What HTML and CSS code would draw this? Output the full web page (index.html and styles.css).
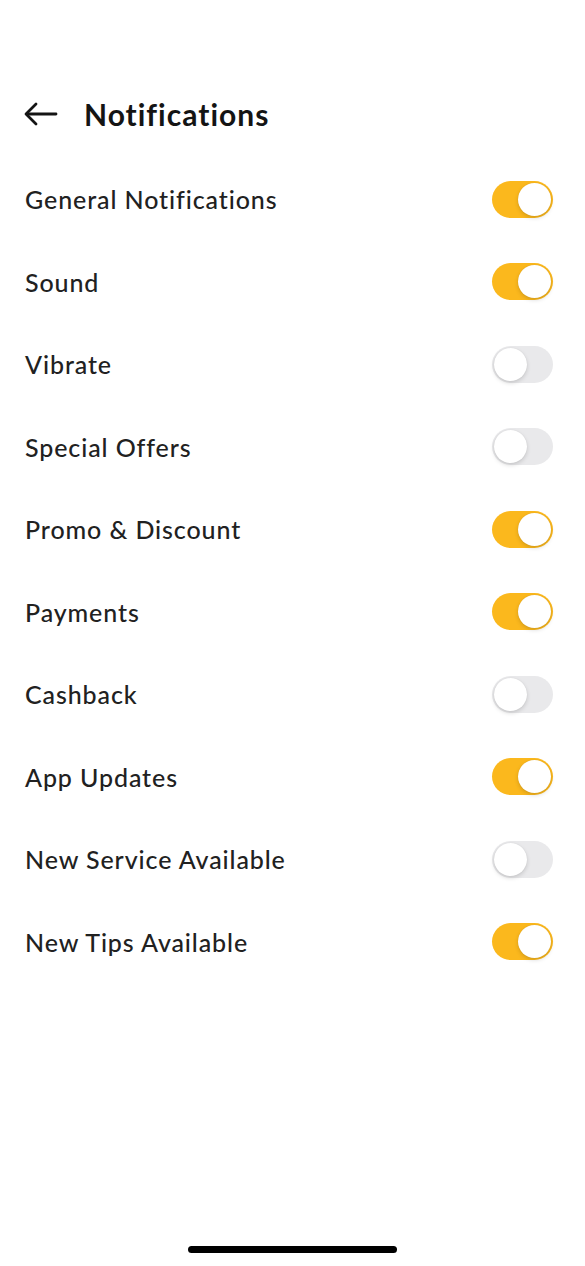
FILE: index.html
```html
<!DOCTYPE html>
<html lang="en">
<head>
    <meta charset="UTF-8">
    <meta name="viewport" content="width=device-width, initial-scale=1.0">
    <title>Notifications</title>
    <link rel="stylesheet" href="styles.css">
</head>
<body>
    <div class="screen">
        <header class="header">
            <svg class="back" width="34" height="24" viewBox="0 0 34 24" fill="none" stroke="#141414" stroke-width="2.8" stroke-linecap="round" stroke-linejoin="round">
                <path d="M32 12H3"/>
                <path d="M12 2L2 12L12 22"/>
            </svg>
            <h1>Notifications</h1>
        </header>

        <ul class="settings">
            <li class="row"><span>General Notifications</span><span class="toggle on"></span></li>
            <li class="row"><span>Sound</span><span class="toggle on"></span></li>
            <li class="row"><span>Vibrate</span><span class="toggle"></span></li>
            <li class="row"><span>Special Offers</span><span class="toggle"></span></li>
            <li class="row"><span>Promo &amp; Discount</span><span class="toggle on"></span></li>
            <li class="row"><span>Payments</span><span class="toggle on"></span></li>
            <li class="row"><span>Cashback</span><span class="toggle"></span></li>
            <li class="row"><span>App Updates</span><span class="toggle on"></span></li>
            <li class="row"><span>New Service Available</span><span class="toggle"></span></li>
            <li class="row"><span>New Tips Available</span><span class="toggle on"></span></li>
        </ul>

        <div class="home-indicator"></div>
    </div>
</body>
</html>
```

FILE: styles.css
```css
body {
    margin: 0;
    background: #fff;
    font-family: Lato, "Noto Sans", sans-serif;
    color: #212121;
}
.screen {
    width: 585px;
    height: 1266px;
}
.header {
    display: flex;
    align-items: center;
    gap: 26px;
    height: 46px;
    padding: 91px 24px 0 24px;
    margin-bottom: 21px;
}
.back {
    display: block;
}
h1 {
    margin: 0;
    font-size: 30px;
    font-weight: 700;
    letter-spacing: 1px;
    color: #141414;
}
.settings {
    list-style: none;
    margin: 0;
    padding: 0 32px 0 25px;
}
.row {
    display: flex;
    align-items: center;
    justify-content: space-between;
    height: 82.5px;
    font-size: 25px;
    font-weight: 500;
    letter-spacing: 0.9px;
}
.toggle {
    position: relative;
    width: 61px;
    height: 37px;
    border-radius: 19px;
    background: #e9e9eb;
}
.toggle::after {
    content: "";
    position: absolute;
    top: 2px;
    left: 2px;
    width: 33px;
    height: 33px;
    border-radius: 50%;
    background: #fff;
    box-shadow: 0 2px 4px rgba(0,0,0,0.15), 0 0 1px rgba(0,0,0,0.1);
}
.toggle.on {
    background: #fbb81d;
}
.toggle.on::after {
    left: 26px;
}
.home-indicator {
    position: fixed;
    left: 188px;
    bottom: 13px;
    width: 209px;
    height: 7px;
    border-radius: 4px;
    background: #000;
}
```
